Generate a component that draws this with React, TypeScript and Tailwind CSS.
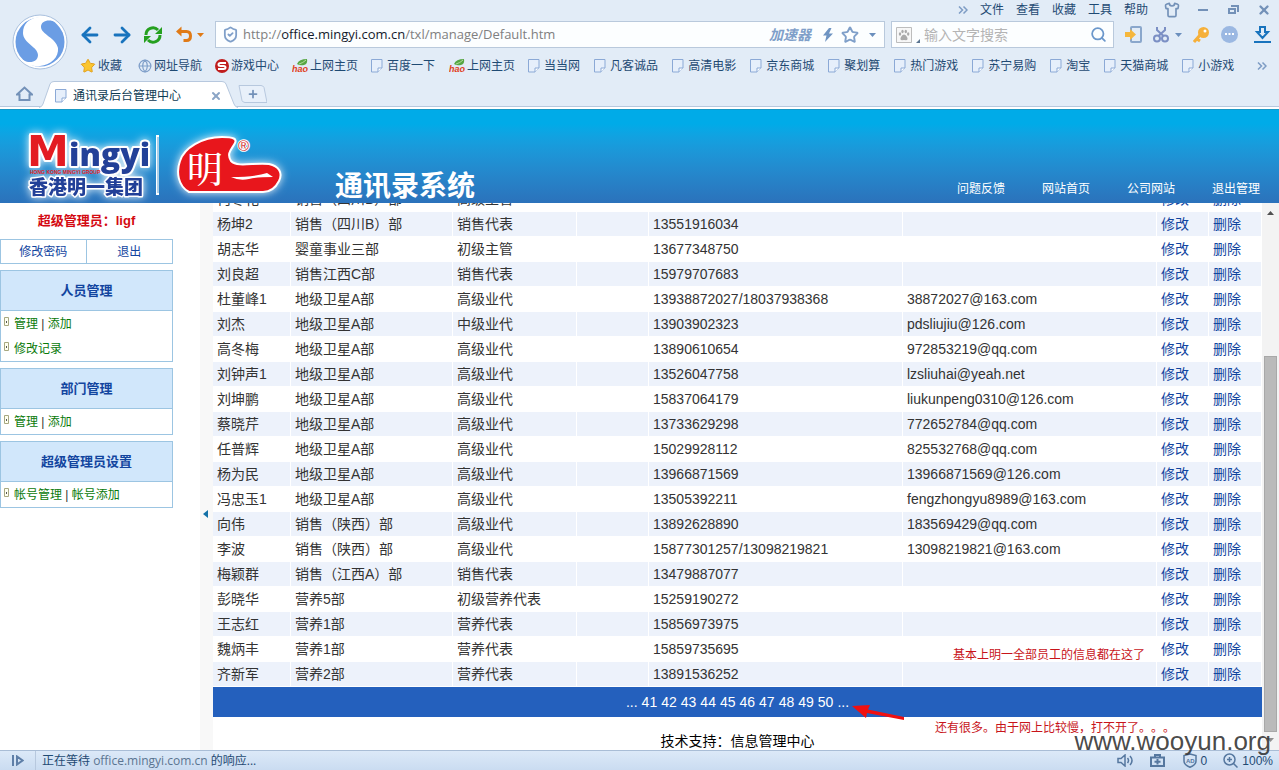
import type { ReactNode } from "react";
import { ArrowLeft, ArrowRight, Globe, Plus, Search, ShieldCheck, Shirt, Star, X } from "lucide-react";

type Person = { name: string; dept: string; title: string; phone: string; mail?: string };

const people: Person[] = [
  { name: "何冬花", dept: "销售（四川B）部", title: "高级主管", phone: "" },
  { name: "杨坤2", dept: "销售（四川B）部", title: "销售代表", phone: "13551916034" },
  { name: "胡志华", dept: "婴童事业三部", title: "初级主管", phone: "13677348750" },
  { name: "刘良超", dept: "销售江西C部", title: "销售代表", phone: "15979707683" },
  { name: "杜董峰1", dept: "地级卫星A部", title: "高级业代", phone: "13938872027/18037938368", mail: "38872027@163.com" },
  { name: "刘杰", dept: "地级卫星A部", title: "中级业代", phone: "13903902323", mail: "pdsliujiu@126.com" },
  { name: "高冬梅", dept: "地级卫星A部", title: "高级业代", phone: "13890610654", mail: "972853219@qq.com" },
  { name: "刘钟声1", dept: "地级卫星A部", title: "高级业代", phone: "13526047758", mail: "lzsliuhai@yeah.net" },
  { name: "刘坤鹏", dept: "地级卫星A部", title: "高级业代", phone: "15837064179", mail: "liukunpeng0310@126.com" },
  { name: "蔡晓芹", dept: "地级卫星A部", title: "高级业代", phone: "13733629298", mail: "772652784@qq.com" },
  { name: "任普辉", dept: "地级卫星A部", title: "高级业代", phone: "15029928112", mail: "825532768@qq.com" },
  { name: "杨为民", dept: "地级卫星A部", title: "高级业代", phone: "13966871569", mail: "13966871569@126.com" },
  { name: "冯忠玉1", dept: "地级卫星A部", title: "高级业代", phone: "13505392211", mail: "fengzhongyu8989@163.com" },
  { name: "向伟", dept: "销售（陕西）部", title: "高级业代", phone: "13892628890", mail: "183569429@qq.com" },
  { name: "李波", dept: "销售（陕西）部", title: "高级业代", phone: "15877301257/13098219821", mail: "13098219821@163.com" },
  { name: "梅颖群", dept: "销售（江西A）部", title: "销售代表", phone: "13479887077" },
  { name: "彭晓华", dept: "营养5部", title: "初级营养代表", phone: "15259190272" },
  { name: "王志红", dept: "营养1部", title: "营养代表", phone: "15856973975" },
  { name: "魏炳丰", dept: "营养1部", title: "营养代表", phone: "15859735695" },
  { name: "齐新军", dept: "营养2部", title: "营养代表", phone: "13891536252" },
];

const bookmarks: { label: string; icon: "star" | "globe" | "game" | "hao" | "page" }[] = [
  { label: "收藏", icon: "star" },
  { label: "网址导航", icon: "globe" },
  { label: "游戏中心", icon: "game" },
  { label: "上网主页", icon: "hao" },
  { label: "百度一下", icon: "page" },
  { label: "上网主页", icon: "hao" },
  { label: "当当网", icon: "page" },
  { label: "凡客诚品", icon: "page" },
  { label: "高清电影", icon: "page" },
  { label: "京东商城", icon: "page" },
  { label: "聚划算", icon: "page" },
  { label: "热门游戏", icon: "page" },
  { label: "苏宁易购", icon: "page" },
  { label: "淘宝", icon: "page" },
  { label: "天猫商城", icon: "page" },
  { label: "小游戏", icon: "page" },
];

const bookmarkGap = {
  star: "mr-4",
  globe: "mr-[13px]",
  game: "mr-[13px]",
  hao: "mr-[13px]",
  page: "mr-3.5",
};

const pages = [41, 42, 43, 44, 45, 46, 47, 48, 49, 50];

function PageIcon() {
  return (
    <svg width="14" height="14" viewBox="0 0 14 14" className="shrink-0">
      <path d="M.5.5h10.500v8.500l-4 4H.5z" fill="#e6effb" stroke="#8ba9d6" />
      <path d="M11 9H7v4" fill="#fff" stroke="#8ba9d6" />
    </svg>
  );
}

function BookmarkIcon({ icon }: { icon: string }) {
  if (icon === "star") return <Star size={16} fill="#fbc52f" stroke="#e2a01c" strokeWidth={1.500} />;
  if (icon === "globe") return <Globe size={14} stroke="#7f9fc9" />;
  if (icon === "game")
    return (
      <svg width="14" height="14" viewBox="0 0 14 14">
        <circle cx="7" cy="7" r="7" fill="#c01d1d" />
        <path d="M11 4H5.500Q3.500 4 3.500 5.500T5.500 7h3q2 0 2 1.500T8.500 10H3" fill="none" stroke="#fff" strokeWidth="2" />
      </svg>
    );
  if (icon === "hao")
    return (
      <svg width="16" height="16" viewBox="0 0 16 16">
        <path d="M5 6Q7 1 15 1q1 5-3 6Q8 8 5 6z" fill="#57a644" />
        <path d="M7 6q4-1 7-4" fill="none" stroke="#b6dd9f" />
        <text x="0" y="14" fontSize="9" fontWeight="700" fontStyle="italic" fill="#e0401c" fontFamily="Liberation Sans, sans-serif">
          hao
        </text>
      </svg>
    );
  return <PageIcon />;
}

function Caret({ color = "#6b8fbd" }: { color?: string }) {
  return (
    <svg width="7" height="4" viewBox="0 0 7 4" className="shrink-0">
      <path d="M0 0h7L3.500 4z" fill={color} />
    </svg>
  );
}

function Chevrons() {
  return (
    <svg width="10" height="8" viewBox="0 0 10 8" fill="none" stroke="#7d9cc4" strokeWidth="1.500">
      <path d="M1 .5L4.500 4 1 7.500M5.500.5L9 4 5.500 7.500" />
    </svg>
  );
}

function BrowserLogo() {
  return (
    <svg width="56" height="56" viewBox="0 0 56 56">
      <circle cx="28" cy="28" r="27" fill="#fff" stroke="#a9c0de" />
      <circle cx="28" cy="28" r="24.500" fill="#6b9de4" />
      <path
        d="M27 3C36 3 41 5 44 8 36 5 29 7 29 13c0 7 15 11 17 21 1 9-7 17-18 18C21 53 14 50 10 46c8 4 16 2 16-5C26 33 11 29 11 19 11 10 17 4 27 3z"
        fill="#fff"
      />
    </svg>
  );
}

function IconButton({ label, className = "", children }: { label: string; className?: string; children: ReactNode }) {
  return (
    <button aria-label={label} className={`flex shrink-0 items-center justify-center ${className}`}>
      {children}
    </button>
  );
}

function MenuRow() {
  return (
    <div className="flex h-[21px] items-center justify-end pr-2 pb-0.5 text-xs text-[#1f4a73]">
      <div className="flex items-center gap-3">
        <Chevrons />
        {["文件", "查看", "收藏", "工具", "帮助"].map((m) => (
          <button key={m}>{m}</button>
        ))}
      </div>
      <IconButton label="皮肤" className="ml-4">
        <Shirt size={16} stroke="#7391b8" strokeWidth={2.500} />
      </IconButton>
      <IconButton label="最小化" className="ml-[18px]">
        <span className="h-0.5 w-2.5 bg-[#7391b8]" />
      </IconButton>
      <IconButton label="还原" className="ml-5">
        <svg width="11" height="10" viewBox="0 0 11 10" fill="none" stroke="#7391b8" strokeWidth="2">
          <path d="M3 1h7v6M1 4h6v4H1z" />
        </svg>
      </IconButton>
      <IconButton label="关闭" className="ml-[18px]">
        <X size={14} stroke="#7391b8" strokeWidth={4} />
      </IconButton>
    </div>
  );
}

function Toolbar() {
  return (
    <div className="flex h-[27px] items-center pr-2">
      <IconButton label="后退">
        <ArrowLeft size={24} stroke="#1873bd" strokeWidth={2.800} />
      </IconButton>
      <IconButton label="前进" className="ml-2">
        <ArrowRight size={24} stroke="#1873bd" strokeWidth={2.800} />
      </IconButton>
      <IconButton label="刷新" className="ml-[9px]">
        <svg width="20" height="18" viewBox="0 0 20 18">
          <path d="M3 9a7 7 0 0 1 12-5M17 9a7 7 0 0 1-12 5" fill="none" stroke="#25a01f" strokeWidth="3" />
          <path d="M19 1v7h-7zM1 17v-7h7z" fill="#25a01f" />
        </svg>
      </IconButton>
      <IconButton label="撤销" className="ml-3">
        <svg width="18" height="17" viewBox="0 0 18 17">
          <path d="M4 5.500h7.500q4 0 4 4.500t-4 4.500H8.500" fill="none" stroke="#e07a16" strokeWidth="3" />
          <path d="M6.500.5v10L1 5.500z" fill="#e07a16" />
        </svg>
      </IconButton>
      <IconButton label="撤销列表" className="ml-1">
        <Caret color="#e07a16" />
      </IconButton>

      <div className="ml-[11px] flex h-[27px] min-w-0 grow items-center border border-[#b9c9dc] bg-[#fcfeff] pr-2 pl-1.5">
        <ShieldCheck size={17} stroke="#7f9fc9" strokeWidth={2.500} className="shrink-0" />
        <div className="ml-1 grow truncate font-['Open_Sans','Noto_Sans',sans-serif] text-[13px] text-[#808080]">
          http://<span className="text-[#141a2c]">office.mingyi.com.cn</span>/txl/manage/Default.htm
        </div>
        <button className="text-sm font-bold text-[#7f9fc9] italic">加速器</button>
        <IconButton label="加速" className="ml-3">
          <svg width="10" height="14" viewBox="0 0 10 14">
            <path d="M6 0L0 7.500h3.500L2 14l8-8.500H6L8.500 0z" fill="#6f94c2" />
          </svg>
        </IconButton>
        <IconButton label="收藏本页" className="ml-2">
          <Star size={18} stroke="#7f9fc9" strokeWidth={2.500} strokeLinejoin="miter" />
        </IconButton>
        <IconButton label="地址列表" className="ml-2.5">
          <Caret />
        </IconButton>
      </div>

      <div className="ml-1.5 flex h-[27px] w-[223px] items-center border border-[#b9c9dc] bg-[#fcfeff] px-1">
        <svg width="16" height="16" viewBox="0 0 16 16" className="shrink-0">
          <path d="M.5.5h15v15H.5z" fill="#f7f7f7" stroke="#bdbdbd" />
          <ellipse cx="4" cy="7" rx="1.200" ry="1.700" fill="#aaa" />
          <ellipse cx="6.500" cy="4.500" rx="1.200" ry="1.700" fill="#aaa" />
          <ellipse cx="9.800" cy="4.500" rx="1.200" ry="1.700" fill="#aaa" />
          <ellipse cx="12.200" cy="7" rx="1.200" ry="1.700" fill="#aaa" />
          <path d="M8 7.500q2 0 3 2.500 1.500 3-1 3.200-2-.5-4 0-2.500-.2-1-3.200 1-2.500 3-2.500z" fill="#aaa" />
        </svg>
        <svg width="4" height="4" viewBox="0 0 4 4" className="mt-3 ml-1 shrink-0">
          <path d="M4 0v4H0z" fill="#5b7591" />
        </svg>
        <input
          aria-label="搜索"
          placeholder="输入文字搜索"
          className="ml-1 w-0 grow bg-transparent text-sm outline-none placeholder:text-[#b4b4b4]"
        />
        <IconButton label="搜索" className="mr-0.5">
          <Search size={17} stroke="#6b97cb" strokeWidth={2.500} />
        </IconButton>
      </div>

      <IconButton label="手机" className="ml-[11px]">
        <svg width="17" height="17" viewBox="0 0 17 17">
          <rect x="6" y="1" width="10" height="15" rx="1" fill="#e2ecf7" stroke="#8aa7cc" strokeWidth="2" />
          <path d="M0 6h5V3l6 5.500L5 14v-3H0z" fill="#f6b73c" />
        </svg>
      </IconButton>
      <IconButton label="截图" className="ml-[11px]">
        <svg width="16" height="17" viewBox="0 0 16 17" fill="none" stroke="#7b8fc4" strokeWidth="2">
          <circle cx="4" cy="12.500" r="3" />
          <circle cx="12" cy="12.500" r="3" />
          <path d="M4 1v3l6.500 6M12 1v3L5.500 10" />
        </svg>
      </IconButton>
      <IconButton label="截图菜单" className="ml-1.5">
        <Caret />
      </IconButton>
      <IconButton label="密码" className="ml-[11px]">
        <svg width="16" height="16" viewBox="0 0 16 16">
          <circle cx="10.500" cy="5.500" r="5.500" fill="#f6b03a" />
          <path d="M8 7l-7 8M4 12l3 2" stroke="#f6b03a" strokeWidth="3" />
          <circle cx="12" cy="4" r="1.500" fill="#fff" />
        </svg>
      </IconButton>
      <IconButton label="更多" className="ml-3">
        <svg width="17" height="17" viewBox="0 0 17 17">
          <circle cx="8.500" cy="8.500" r="8.500" fill="#9bb8e2" />
          <path d="M4 8h2M7.500 8h2M11 8h2" stroke="#fff" strokeWidth="2" />
        </svg>
      </IconButton>
      <IconButton label="下载" className="ml-4">
        <svg width="17" height="17" viewBox="0 0 17 17" fill="none" stroke="#1873bd" strokeWidth="2">
          <path d="M6 1h5v5h3l-5.500 6L3 6h3zM0 16h17" />
        </svg>
      </IconButton>
    </div>
  );
}

function TabRow() {
  return (
    <div className="flex h-[26px] items-center border-b border-[#b7c8de]">
      <IconButton label="主页" className="ml-4">
        <svg width="17" height="16" viewBox="0 0 17 16" fill="none" stroke="#7391b8" strokeWidth="2">
          <path d="M1 8.500L8.500 1.500 16 8.500h-2.500V14h-10V8.500z" />
        </svg>
      </IconButton>
      <div className="relative ml-1.5 flex h-[26px] w-[199px] items-center pl-4">
        <svg width="199" height="27" viewBox="0 0 199 27" className="absolute top-0 left-0">
          <path d="M0 26.500Q3 26 4 23L11 3Q12 .5 15 .5h168q3 0 4 2.500l8 20q1 3 4 3.500" fill="#fff" stroke="#b7c8de" />
        </svg>
        <div className="relative flex grow items-center gap-1 pt-1 text-xs text-[#0d3a52]">
          <PageIcon />
          <span className="grow">通讯录后台管理中心</span>
          <IconButton label="关闭标签" className="mr-4">
            <X size={12} stroke="#8ba5c6" strokeWidth={4} />
          </IconButton>
        </div>
      </div>
      <IconButton label="新标签" className="relative h-[18px] w-[29px]">
        <svg width="29" height="18" viewBox="0 0 29 18" className="absolute">
          <path d="M1 .5h22q2 0 3 2l3 15H7q-2 0-3-2z" fill="#e8f0fa" stroke="#b7c8de" />
        </svg>
        <Plus size={12} stroke="#7391b8" strokeWidth={3.500} className="relative" />
      </IconButton>
    </div>
  );
}

function BrowserChrome() {
  return (
    <header className="shrink-0 bg-[#e2ecf7]">
      <div className="flex">
        <div className="w-[78px] shrink-0 pt-3.5 pl-3">
          <BrowserLogo />
        </div>
        <div className="min-w-0 grow">
          <MenuRow />
          <Toolbar />
          <nav className="flex h-[33px] items-center pt-0.5 pr-3 pl-0.5 text-xs text-[#1f4a73]">
            {bookmarks.map((b, i) => (
              <a key={i} href="#" className={`flex shrink-0 items-center gap-0.5 ${bookmarkGap[b.icon]}`}>
                <BookmarkIcon icon={b.icon} />
                {b.label}
              </a>
            ))}
            <IconButton label="更多书签" className="ml-auto">
              <Chevrons />
            </IconButton>
          </nav>
        </div>
      </div>
      <TabRow />
      <div className="h-0.5 bg-white" />
    </header>
  );
}

function CompanyLogo() {
  return (
    <svg width="280" height="88" viewBox="0 0 280 88" className="shrink-0">
      <defs>
        <filter id="glow" x="-20%" y="-20%" width="140%" height="140%">
          <feDropShadow dx="0" dy="0" stdDeviation="4" floodColor="#fff" floodOpacity="0.9" />
        </filter>
      </defs>
      <g filter="url(#glow)" stroke="#fff" strokeWidth="4" strokeLinejoin="round" paintOrder="stroke">
        <text x="11" y="51" fontSize="42" fontWeight="700" fill="#e31b23" fontFamily="DejaVu Sans, sans-serif">
          M
        </text>
        <text x="53" y="51" fontSize="32" fontWeight="800" fill="#233f98" fontFamily="Open Sans, Liberation Sans, sans-serif">
          ingyi
        </text>
        <text x="13" y="79" fontSize="19" fontWeight="900" fill="#233f98" strokeWidth="3" fontFamily="Noto Sans CJK SC, sans-serif">
          香港明一集团
        </text>
      </g>
      <text x="14" y="59" fontSize="5" fontWeight="700" fill="#e31b23" fontFamily="Liberation Sans, sans-serif">
        HONG KONG MINGYI GROUP
      </text>
      <path d="M141.500 20v60" stroke="#fff" strokeWidth="3" />
      <path d="M142 22v56" stroke="#5a9fd2" />
      <g filter="url(#glow)">
        <path
          d="M173 77C162 71 160 57 164 46 168 33 186 22 206 22c12 0 15 2 13 6-3 6-9 10-4 18 7 7 24 1 38 3 10 2 14 9 10 17-3 6-8 11-16 11z"
          fill="#e8141e"
          stroke="#fff"
          strokeWidth="2"
        />
      </g>
      <text x="171" y="68" fontSize="36" fontWeight="500" fill="#fff" fontFamily="Noto Serif CJK SC, Noto Sans CJK SC, sans-serif">
        明
      </text>
      <path d="M215 62q24 0 36-4l6 4q-16 0-24 2-10 2-18-2z" fill="#fff" />
      <text
        x="222"
        y="36"
        fontSize="15"
        fill="#d32a2a"
        stroke="#fff"
        strokeWidth="2"
        paintOrder="stroke"
        fontFamily="Liberation Sans, sans-serif"
      >
        ®
      </text>
    </svg>
  );
}

function SiteHeader() {
  return (
    <div className="flex h-[94px] shrink-0 items-end justify-between border-t border-[#1798c4] bg-gradient-to-b from-[#00abe8] from-15% to-[#2b72bb] pr-[19px] pl-4">
      <div className="flex items-end">
        <CompanyLogo />
        <h1 className="ml-[39px] text-[28px] leading-8 font-bold text-white">通讯录系统</h1>
      </div>
      <nav className="flex gap-[37px] pb-1 text-xs leading-5 text-white">
        {["问题反馈", "网站首页", "公司网站", "退出管理"].map((t) => (
          <a key={t} href="#">
            {t}
          </a>
        ))}
      </nav>
    </div>
  );
}

function SidePanel({ title, items }: { title: string; items: string[][] }) {
  return (
    <section className="mt-1.5 border border-[#9cc5e2]">
      <h2 className="border-b border-[#9cc5e2] bg-[#d1e7fb] text-center text-[13px] leading-[39px] font-bold text-[#12459f]">
        {title}
      </h2>
      <ul>
        {items.map((links) => (
          <li key={links[0]} className="flex h-[25px] items-center pl-[3px] text-[#0a7a0a]">
            <svg width="5" height="9" viewBox="0 0 5 9" className="mb-1 shrink-0">
              <path d="M.5.5h4v8h-4z" fill="#fffff0" stroke="#a8a880" />
              <path d="M2 4h1v2H2z" fill="#555" />
            </svg>
            <div className="ml-[5px]">
              {links.map((l, i) => (
                <span key={l}>
                  {i > 0 && <span className="text-[#333]"> | </span>}
                  <a href="#">{l}</a>
                </span>
              ))}
            </div>
          </li>
        ))}
      </ul>
    </section>
  );
}

function Sidebar() {
  return (
    <aside className="w-[173px] shrink-0 text-xs">
      <p className="h-9 text-center text-[13px] leading-9 font-bold text-[#d40a12]">超级管理员：ligf</p>
      <div className="flex h-[25px] border border-[#9cc5e2] text-[#12459f]">
        <button className="w-1/2 border-r border-[#9cc5e2]">修改密码</button>
        <button className="w-1/2">退出</button>
      </div>
      <SidePanel title="人员管理" items={[["管理", "添加"], ["修改记录"]]} />
      <SidePanel title="部门管理" items={[["管理", "添加"]]} />
      <SidePanel title="超级管理员设置" items={[["帐号管理", "帐号添加"]]} />
    </aside>
  );
}

function PeopleTable() {
  return (
    <table className="-mt-4 w-full table-fixed border-separate border-spacing-0 text-sm text-[#333] [&_td]:h-[25px] [&_td]:border-r [&_td]:border-b [&_td]:border-white [&_td]:py-0 [&_td]:pl-1 [&_td]:leading-6 [&_td]:whitespace-nowrap">
      <colgroup>
        <col className="w-[78px]" />
        <col className="w-[162px]" />
        <col className="w-[124px]" />
        <col className="w-[72px]" />
        <col className="w-[254px]" />
        <col />
        <col className="w-[52px]" />
        <col className="w-[53px]" />
      </colgroup>
      <tbody>
        {people.map((p) => (
          <tr key={p.name} className="even:bg-[#edf2fb]">
            <td>{p.name}</td>
            <td>{p.dept}</td>
            <td>{p.title}</td>
            <td></td>
            <td>{p.phone}</td>
            <td>{p.mail}</td>
            <td>
              <a href="#" className="text-[#12459f]">
                修改
              </a>
            </td>
            <td>
              <a href="#" className="text-[#12459f]">
                删除
              </a>
            </td>
          </tr>
        ))}
      </tbody>
    </table>
  );
}

function ScrollBar() {
  return (
    <div className="flex w-[17px] shrink-0 flex-col items-center bg-[#f3f3f3]">
      <svg width="7" height="4" viewBox="0 0 7 4" className="mt-2 mb-1.5 shrink-0">
        <path d="M0 4h7L3.500 0z" fill="#505050" />
      </svg>
      <div className="flex-[136]" />
      <div className="w-[13px] flex-[377] border border-[#a8a8a8] bg-[#bababa]" />
      <svg width="7" height="4" viewBox="0 0 7 4" className="mt-1.5 mb-2 shrink-0">
        <path d="M0 0h7L3.500 4z" fill="#909090" />
      </svg>
    </div>
  );
}

// red notes, arrow and watermark lying over the page
function Annotations() {
  return (
    <div className="pointer-events-none absolute inset-0 text-xs text-[#c8141a]">
      <p className="absolute right-[134px] bottom-[105px] leading-5">基本上明一全部员工的信息都在这了</p>
      <p className="absolute right-[104px] bottom-8 leading-5">还有很多。由于网上比较慢，打不开了。。。</p>
      <svg width="54" height="18" viewBox="0 0 54 18" className="absolute right-[373px] bottom-[49px]">
        <path d="M0 3L18 2 16 6.500 52 14v3L15 10l-1 5z" fill="#f01010" />
      </svg>
      <p className="absolute right-2 bottom-[11px] text-[26px] leading-9 text-[#333]/90">www.wooyun.org</p>
    </div>
  );
}

function StatusBar() {
  return (
    <footer className="flex h-5 shrink-0 items-center border-t border-[#a9bdd6] bg-gradient-to-b from-[#dce9f8] to-[#cadcf1] pr-1.5 text-xs text-[#1f4a73]">
      <IconButton label="侧栏" className="h-full w-[36px] border-r border-[#b7c8de]">
        <svg width="12" height="11" viewBox="0 0 12 11" fill="none" stroke="#5f7fa8" strokeWidth="2">
          <path d="M1 0v11M5 1.500v8l5.500-4z" />
        </svg>
      </IconButton>
      <p className="ml-1.5 grow font-['Open_Sans','Noto_Sans_CJK_SC',sans-serif]">
        正在等待 <span className="text-[#5b7591]">office.mingyi.com.cn</span> 的响应...
      </p>
      <IconButton label="声音">
        <svg width="17" height="13" viewBox="0 0 17 13" fill="none" stroke="#55779f" strokeWidth="1.500">
          <path d="M1 4.500h3l4-3.500v11L4 8.500H1zM10.500 4q2 2.500 0 5M13 2q4 4.500 0 9" />
        </svg>
      </IconButton>
      <IconButton label="修复" className="ml-4">
        <svg width="15" height="13" viewBox="0 0 15 13" fill="none" stroke="#55779f" strokeWidth="2">
          <path d="M1 3.500h13V12H1zM5 3V1h5v2M7.500 5v5.500M4.500 7.800h6" />
        </svg>
      </IconButton>
      <button className="ml-[18px] flex items-center gap-1">
        <svg width="14" height="15" viewBox="0 0 14 15" fill="none" stroke="#55779f" strokeWidth="1.500">
          <path d="M7 1l6 1.500V8q0 4-6 6.200Q1 12 1 8V2.500z" />
          <text x="3" y="9.500" fontSize="6" fontWeight="700" fill="#55779f" stroke="none" fontFamily="Liberation Sans, sans-serif">
            AD
          </text>
        </svg>
        0
      </button>
      <button className="ml-4 flex items-center gap-1">
        <svg width="15" height="15" viewBox="0 0 15 15" fill="none" stroke="#55779f" strokeWidth="1.500">
          <circle cx="6.500" cy="6.500" r="5.500" />
          <path d="M10.500 10.500l4 4M6.500 4v5M4 6.500h5" />
        </svg>
        100%
      </button>
    </footer>
  );
}

export default function App() {
  return (
    <div className="relative flex h-screen flex-col overflow-hidden bg-white font-['Liberation_Sans','Noto_Sans_CJK_SC',sans-serif] [text-spacing-trim:space-all]">
      <BrowserChrome />
      <SiteHeader />
      <div className="flex min-h-0 grow">
        <Sidebar />
        <div className="ml-[27px] flex w-[13px] shrink-0 items-center bg-[#f8f8f8] pt-[74px]">
          <IconButton label="收起" className="ml-[3px]">
            <svg width="5" height="8" viewBox="0 0 5 8">
              <path d="M5 0v8L0 4z" fill="#1572a8" />
            </svg>
          </IconButton>
        </div>
        <main className="min-w-0 grow overflow-hidden">
          <PeopleTable />
          <div className="flex h-[30px] items-center justify-center gap-1 bg-[#2460bd] text-sm text-white">
            <a href="#">...</a>
            {pages.map((n) => (
              <a key={n} href="#">
                {n}
              </a>
            ))}
            <a href="#">...</a>
          </div>
          <p className="pt-3.5 text-center text-sm leading-5 text-black">技术支持：信息管理中心</p>
        </main>
        <ScrollBar />
      </div>
      <Annotations />
      <StatusBar />
    </div>
  );
}
